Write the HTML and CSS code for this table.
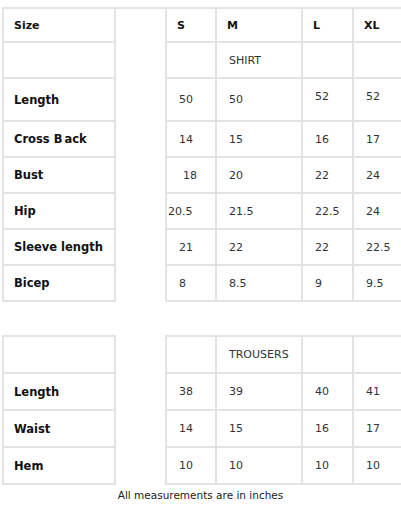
FILE: index.html
```html
<!DOCTYPE html>
<html>
<head>
<meta charset="utf-8">
<link rel="stylesheet" href="styles.css">
</head>
<body>
<div class="chart">
  <table class="sizes shirt">
    <colgroup>
      <col class="c-label"><col class="c-gap"><col class="c-s"><col class="c-m"><col class="c-l"><col class="c-xl">
    </colgroup>
    <tr class="head">
      <th>Size</th><td class="gap"></td><th>S</th><th>M</th><th>L</th><th>XL</th>
    </tr>
    <tr>
      <th></th><td class="gap"></td><td></td><td>SHIRT</td><td></td><td></td>
    </tr>
    <tr>
      <th>Length</th><td class="gap"></td><td>50</td><td>50</td><td class="up">52</td><td class="up">52</td>
    </tr>
    <tr>
      <th>Cross B<span class="wide">a</span>ck</th><td class="gap"></td><td>14</td><td>15</td><td>16</td><td>17</td>
    </tr>
    <tr>
      <th>Bust</th><td class="gap"></td><td class="indent">18</td><td>20</td><td>22</td><td>24</td>
    </tr>
    <tr>
      <th>Hip</th><td class="gap"></td><td class="tight">20.5</td><td>21.5</td><td>22.5</td><td>24</td>
    </tr>
    <tr>
      <th>Sleeve length</th><td class="gap"></td><td>21</td><td>22</td><td>22</td><td>22.5</td>
    </tr>
    <tr>
      <th>Bicep</th><td class="gap"></td><td>8</td><td>8.5</td><td>9</td><td>9.5</td>
    </tr>
  </table>

  <table class="sizes trousers">
    <colgroup>
      <col class="c-label"><col class="c-gap"><col class="c-s"><col class="c-m"><col class="c-l"><col class="c-xl">
    </colgroup>
    <tr>
      <th></th><td class="gap"></td><td></td><td>TROUSERS</td><td></td><td></td>
    </tr>
    <tr>
      <th>Length</th><td class="gap"></td><td>38</td><td>39</td><td>40</td><td>41</td>
    </tr>
    <tr>
      <th>Waist</th><td class="gap"></td><td>14</td><td>15</td><td>16</td><td>17</td>
    </tr>
    <tr>
      <th>Hem</th><td class="gap"></td><td>10</td><td>10</td><td>10</td><td>10</td>
    </tr>
  </table>

  <p class="note">All measurements are in inches</p>
</div>
</body>
</html>
```

FILE: styles.css
```css
html, body {
  margin: 0;
  padding: 0;
  background: #ffffff;
  overflow: hidden;
}

.chart {
  width: 401px;
  padding-top: 7px;
}

.sizes {
  border-collapse: collapse;
  table-layout: fixed;
  width: 400px;
  margin-left: 2px;
  font-family: "DejaVu Sans", sans-serif;
  font-size: 11px;
  color: #333333;
}

.c-label { width: 112px; }
.c-gap { width: 51px; }
.c-s { width: 50px; }
.c-m { width: 86px; }
.c-l { width: 51px; }
.c-xl { width: 50px; }

.sizes th,
.sizes td {
  border: 2px solid #e3e3e3;
  border-right: none;
  height: 34px;
  padding: 0 0 0 12px;
  text-align: left;
  vertical-align: middle;
  white-space: nowrap;
}

.trousers th,
.trousers td {
  height: 35px;
}

.sizes th {
  font-weight: bold;
  font-size: 11.5px;
  color: #111111;
  padding-left: 10px;
}

.sizes tr.head th,
.sizes tr.head td {
  height: 32px;
}

.sizes tr.head th {
  font-size: 11px;
}

.sizes td.gap {
  border-top-style: hidden;
  border-bottom-style: hidden;
  border-right: 2px solid #e3e3e3;
}

.shirt tr.head td.gap {
  border-top: 2px solid #e3e3e3;
}

.sizes td.indent { padding-left: 16px; }
.sizes td.tight { padding-left: 1px; }
.sizes td.up { padding-bottom: 7px; }

.wide { margin-left: 2px; }

.trousers {
  margin-top: 33px;
}

.note {
  margin: 4px 0 0;
  text-align: center;
  font-family: "DejaVu Sans", sans-serif;
  font-size: 10.5px;
  color: #222222;
}
```
